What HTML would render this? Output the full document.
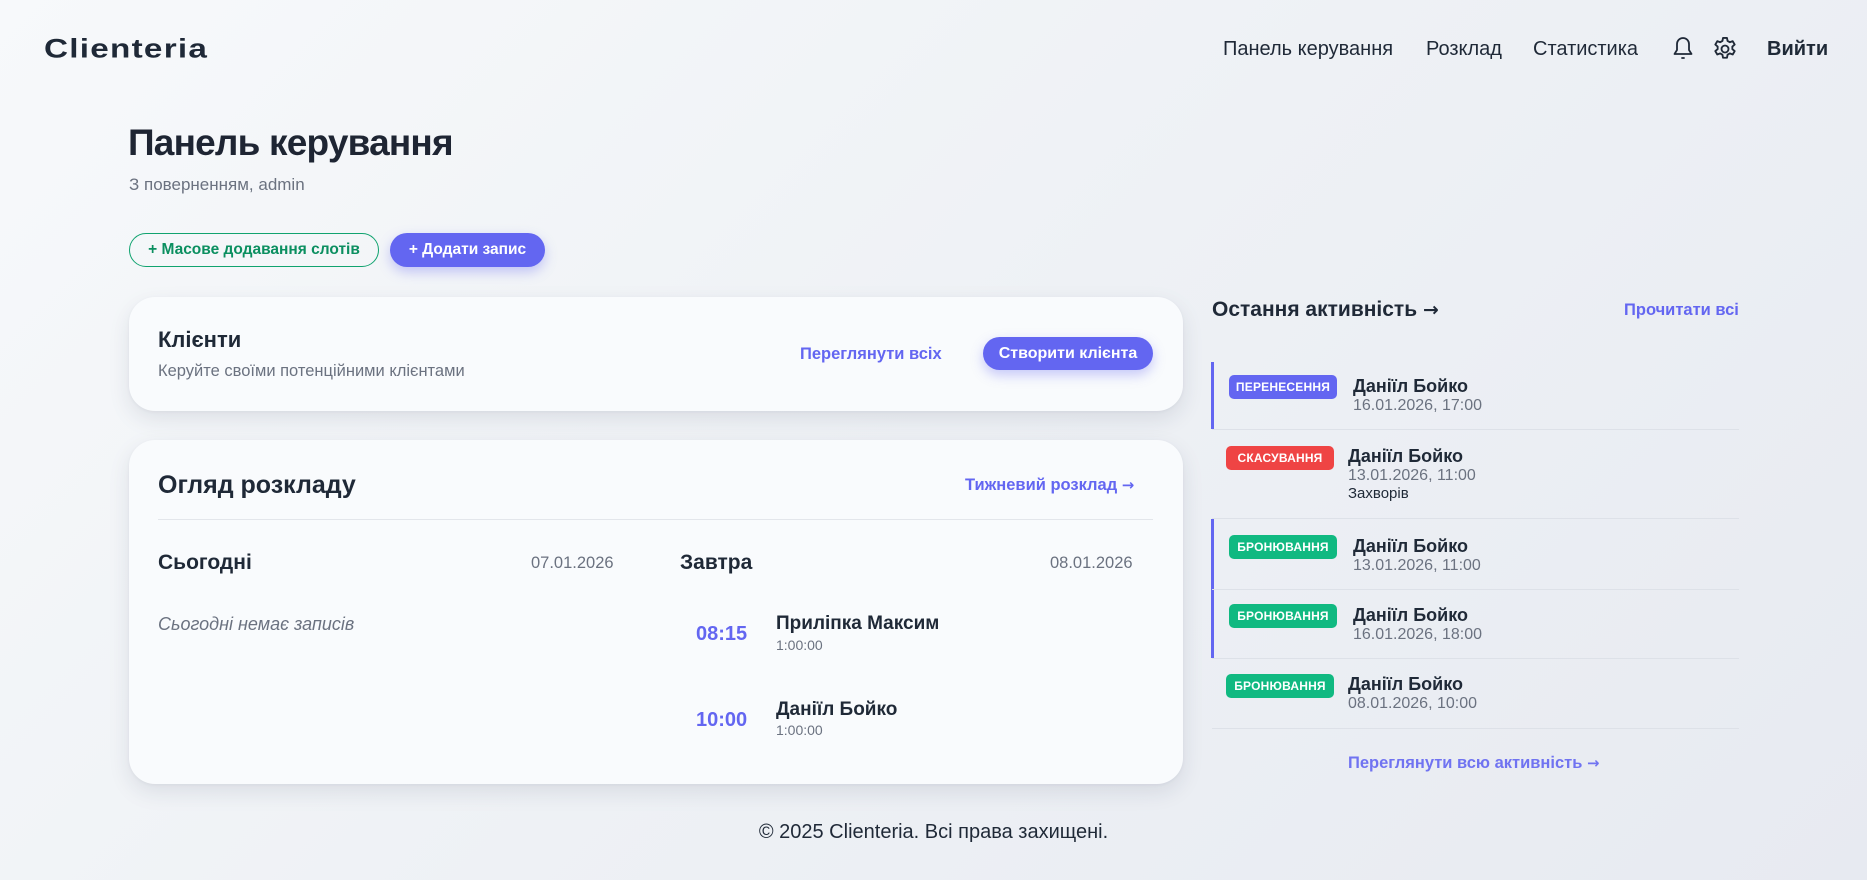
<!DOCTYPE html>
<html><head><meta charset="utf-8"><style>
*{margin:0;padding:0;box-sizing:border-box}
body{width:1867px;height:880px;overflow:hidden;position:relative;font-family:"Liberation Sans",sans-serif;color:#1f2937;background:linear-gradient(135deg,#f7f9fb 0%,#eef1f5 50%,#e7eaf1 100%)}
.a{position:absolute;white-space:nowrap}
.card{position:absolute;background:#f9fbfd;border-radius:26px;box-shadow:0 8px 22px rgba(30,40,70,.10),0 1px 3px rgba(30,40,70,.05)}
.b{font-weight:bold}
.ind{color:#6366f1}
.ar{font-family:"DejaVu Sans",sans-serif;font-size:.9em}
.badge{position:absolute;height:24px;width:108px;border-radius:5px;color:#fff;font-size:12px;font-weight:bold;text-align:center;line-height:24px;letter-spacing:.2px}
.sep{position:absolute;left:1212px;width:527px;height:1px;background:#dde1e8}
.bar{position:absolute;left:1211px;width:3px;background:#6366f1}
.nm{font-size:18px;font-weight:bold;color:#1f2937}
.dt{font-size:16px;color:#6b7280}
</style></head><body>
<div class="a" style="left:44px;top:30px;font-size:32px;letter-spacing:1.2px;color:#1f2937;font-weight:bold;transform:scale(1.04,.85);transform-origin:left center">Clienteria</div>

<div class="a" style="left:1223px;top:37px;font-size:20px;line-height:24px">Панель керування</div>
<div class="a" style="left:1426px;top:37px;font-size:20px;line-height:24px">Розклад</div>
<div class="a" style="left:1533px;top:37px;font-size:20px;line-height:24px">Статистика</div>
<svg class="a" style="left:1671px;top:35px" width="24" height="26" viewBox="0 0 24 26" fill="none" stroke="#1f2937" stroke-width="1.8" stroke-linecap="round" stroke-linejoin="round"><path d="M12 3a6 6 0 0 0-6 6v6l-2.5 4h17L18 15V9a6 6 0 0 0-6-6z"/><path d="M11 23h2"/></svg>
<svg class="a" style="left:1711px;top:35px" width="28" height="28" viewBox="0 0 24 24" fill="none" stroke="#1f2937" stroke-width="1.6" stroke-linejoin="round"><path d="M10.3 2.5h3.4l.5 2.6 1.9 1.1 2.5-.9 1.7 2.9-2 1.7v2.2l2 1.7-1.7 2.9-2.5-.9-1.9 1.1-.5 2.6h-3.4l-.5-2.6-1.9-1.1-2.5.9-1.7-2.9 2-1.7V9.9l-2-1.7 1.7-2.9 2.5.9 1.9-1.1z"/><circle cx="12" cy="12" r="3"/></svg>
<div class="a" style="left:1767px;top:37px;font-size:20px;line-height:24px;font-weight:bold">Вийти</div>

<div class="a b" style="left:128px;top:121px;font-size:37px;line-height:44px;letter-spacing:-.8px;color:#1e2533">Панель керування</div>
<div class="a" style="left:129px;top:175px;font-size:17px;line-height:20px;color:#6b7280">З поверненням, admin</div>

<div class="a" style="left:129px;top:233px;width:250px;height:34px;border:1.5px solid #10a36f;border-radius:17px;color:#0b8f60;font-size:15.5px;font-weight:bold;text-align:center;line-height:31px">+ Масове додавання слотів</div>
<div class="a" style="left:390px;top:233px;width:155px;height:34px;background:#6366f1;border-radius:17px;color:#fff;font-size:15.5px;font-weight:bold;text-align:center;line-height:34px;box-shadow:0 5px 12px rgba(99,102,241,.35)">+ Додати запис</div>

<div class="card" style="left:129px;top:297px;width:1054px;height:114px"></div>
<div class="a b" style="left:158px;top:327px;font-size:22px;line-height:26px">Клієнти</div>
<div class="a" style="left:158px;top:361px;font-size:16.5px;line-height:20px;color:#6b7280">Керуйте своїми потенційними клієнтами</div>
<div class="a b ind" style="left:800px;top:344px;font-size:16.5px;line-height:20px">Переглянути всіх</div>
<div class="a" style="left:983px;top:337px;width:170px;height:33px;background:#6366f1;border-radius:17px;color:#fff;font-size:16px;font-weight:bold;text-align:center;line-height:33px;box-shadow:0 5px 12px rgba(99,102,241,.35)">Створити клієнта</div>

<div class="card" style="left:129px;top:440px;width:1054px;height:344px"></div>
<div class="a b" style="left:158px;top:470px;font-size:25px;line-height:30px">Огляд розкладу</div>
<div class="a b ind" style="left:965px;top:475px;font-size:16.5px;line-height:20px">Тижневий розклад <span class="ar">→</span></div>
<div style="position:absolute;left:158px;top:519px;width:995px;height:1px;background:#e3e6eb"></div>
<div class="a b" style="left:158px;top:550px;font-size:21px;line-height:25px">Сьогодні</div>
<div class="a" style="left:531px;top:553px;font-size:16.5px;line-height:20px;color:#6b7280">07.01.2026</div>
<div class="a b" style="left:680px;top:550px;font-size:21px;line-height:25px">Завтра</div>
<div class="a" style="left:1050px;top:553px;font-size:16.5px;line-height:20px;color:#6b7280">08.01.2026</div>
<div class="a" style="left:158px;top:613px;font-size:18px;line-height:22px;color:#6b7280;font-style:italic">Сьогодні немає записів</div>

<div class="a b ind" style="left:696px;top:622px;font-size:20px;line-height:24px">08:15</div>
<div class="a nm" style="left:776px;top:613px;font-size:19px;line-height:22px">Приліпка Максим</div>
<div class="a" style="left:776px;top:637px;font-size:14px;line-height:17px;color:#6b7280">1:00:00</div>
<div class="a b ind" style="left:696px;top:708px;font-size:20px;line-height:24px">10:00</div>
<div class="a nm" style="left:776px;top:699px;font-size:19px;line-height:22px">Даніїл Бойко</div>
<div class="a" style="left:776px;top:722px;font-size:14px;line-height:17px;color:#6b7280">1:00:00</div>

<div class="a b" style="left:1212px;top:297px;font-size:21px;line-height:25px">Остання активність <span class="ar">→</span></div>
<div class="a b ind" style="left:1624px;top:300px;font-size:16.5px;line-height:20px">Прочитати всі</div>

<div class="bar" style="top:362px;height:67px"></div>
<div class="badge" style="left:1229px;top:375px;background:#6366f1">ПЕРЕНЕСЕННЯ</div>
<div class="a nm" style="left:1353px;top:375px;line-height:22px">Даніїл Бойко</div>
<div class="a dt" style="left:1353px;top:396px;line-height:19px">16.01.2026, 17:00</div>
<div class="sep" style="top:429px"></div>

<div class="badge" style="left:1226px;top:446px;background:#ef4444">СКАСУВАННЯ</div>
<div class="a nm" style="left:1348px;top:445px;line-height:22px">Даніїл Бойко</div>
<div class="a dt" style="left:1348px;top:466px;line-height:19px">13.01.2026, 11:00</div>
<div class="a" style="left:1348px;top:484px;font-size:15px;line-height:19px;color:#1f2937">Захворів</div>
<div class="sep" style="top:518px"></div>

<div class="bar" style="top:519px;height:139px"></div>
<div class="badge" style="left:1229px;top:535px;background:#10b981">БРОНЮВАННЯ</div>
<div class="a nm" style="left:1353px;top:535px;line-height:22px">Даніїл Бойко</div>
<div class="a dt" style="left:1353px;top:556px;line-height:19px">13.01.2026, 11:00</div>
<div class="sep" style="top:589px"></div>

<div class="badge" style="left:1229px;top:604px;background:#10b981">БРОНЮВАННЯ</div>
<div class="a nm" style="left:1353px;top:604px;line-height:22px">Даніїл Бойко</div>
<div class="a dt" style="left:1353px;top:625px;line-height:19px">16.01.2026, 18:00</div>
<div class="sep" style="top:658px"></div>

<div class="badge" style="left:1226px;top:674px;background:#10b981">БРОНЮВАННЯ</div>
<div class="a nm" style="left:1348px;top:673px;line-height:22px">Даніїл Бойко</div>
<div class="a dt" style="left:1348px;top:694px;line-height:19px">08.01.2026, 10:00</div>
<div class="sep" style="top:728px"></div>

<div class="a b ind" style="left:1348px;top:753px;font-size:16.5px;line-height:20px;opacity:.9">Переглянути всю активність <span class="ar">→</span></div>

<div class="a" style="left:0;width:1867px;text-align:center;top:821px;font-size:20px;line-height:22px;color:#1f2937">© 2025 Clienteria. Всі права захищені.</div>
</body></html>
